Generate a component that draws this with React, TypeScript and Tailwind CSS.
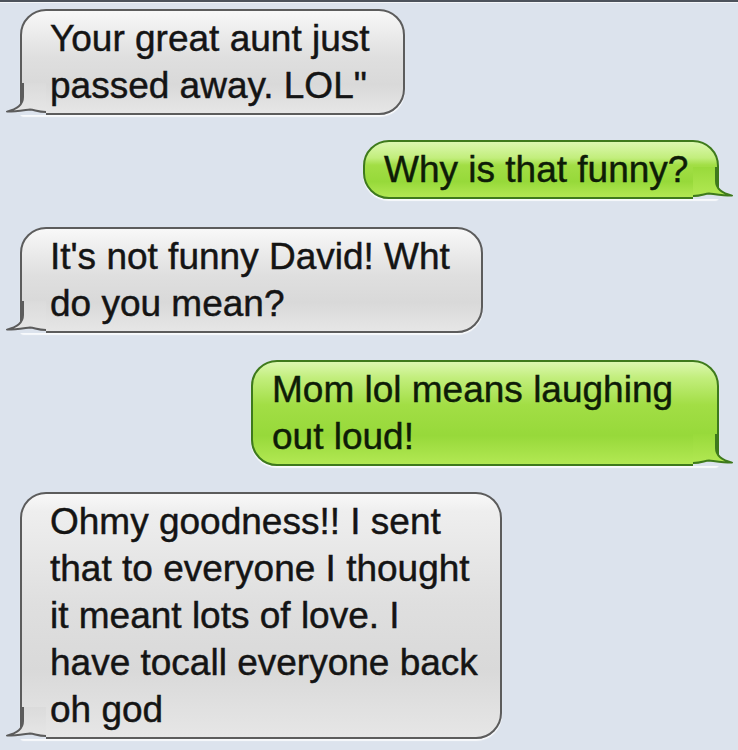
import React from "react";

type Msg = {
  side: "in" | "out";
  lines: string[];
  box: string;
};

const messages: Msg[] = [
  {
    side: "in",
    lines: ["Your great aunt just", 'passed away. LOL"'],
    box: "w-[385px] mt-[6px]",
  },
  {
    side: "out",
    lines: ["Why is that funny?"],
    box: "w-[356px] mt-[25px]",
  },
  {
    side: "in",
    lines: ["It's not funny David! Wht", "do you mean?"],
    box: "w-[463px] mt-[28px]",
  },
  {
    side: "out",
    lines: ["Mom lol means laughing", "out loud!"],
    box: "w-[468px] mt-[27px]",
  },
  {
    side: "in",
    lines: [
      "Ohmy goodness!! I sent",
      "that to everyone I thought",
      "it meant lots of love. I",
      "have tocall everyone back",
      "oh god",
    ],
    box: "w-[482px] mt-[26px]",
  },
];

// the little hook at the bottom corner of each bubble
const Tail = ({ side }: { side: "in" | "out" }) => {
  const gray = side === "in";
  const id = gray ? "tailGray" : "tailGreen";
  return (
    <svg
      width="40"
      height="32"
      viewBox="0 0 40 32"
      className={
        gray
          ? "absolute left-[-16px] bottom-[-2px]"
          : "absolute right-[-16px] bottom-[-2px] -scale-x-100"
      }
    >
      <defs>
        <linearGradient id={id} x1="0" y1="0" x2="0" y2="1">
          <stop offset="0" stopColor={gray ? "#dbdbdb" : "#99da3b"} />
          <stop offset="1" stopColor={gray ? "#e6e6e6" : "#b2e853"} />
        </linearGradient>
      </defs>
      <path
        d="M0.5 28.6 C8 28.8 16 27.5 24 26.5 C29 27 32 29.5 40 29.5 L40 32 L0 32 Z"
        fill="#dce3ed"
      />
      <path
        d="M17 0 L17 14 C17 21 12 26 1 28.6 C8 28.8 16 27.5 24 26.5 C29 27 32 29.5 40 29.5 L40 0 Z"
        fill={`url(#${id})`}
      />
      <path
        d="M17 0 L17 14 C17 21 12 26 1 28.6 C8 28.8 16 27.5 24 26.5 C29 27 32 29 40 29"
        fill="none"
        stroke={gray ? "#5c5c5c" : "#3e7a1c"}
        strokeWidth="2"
        strokeLinejoin="round"
      />
    </svg>
  );
};

const Bubble = ({ msg }: { msg: Msg }) => {
  const gray = msg.side === "in";
  return (
    <div
      className={
        gray
          ? `relative self-start ml-[20px] ${msg.box} border-2 border-[#5c5c5c] rounded-[26px] rounded-bl-[4px] py-[4px] pl-[28px] text-[#141414] bg-[linear-gradient(to_bottom,#f8f8f8_0%,#eeeeee_18px,#dfdfdf_45%,#d9d9d9_72%,#e6e6e6_100%)] shadow-[0_2px_1px_rgba(255,255,255,0.8)]`
          : `relative self-end mr-[19px] ${msg.box} border-2 border-[#3e7a1c] rounded-[26px] rounded-br-[4px] py-[4px] pl-[19px] text-[#0e1c07] bg-[linear-gradient(to_bottom,#dcf7b0_0%,#c2ee7c_16px,#a2de45_42%,#97d93a_72%,#b2e853_100%)] shadow-[0_2px_1px_rgba(255,255,255,0.8)]`
      }
    >
      <Tail side={msg.side} />
      <div className="relative whitespace-nowrap text-[37px] leading-[47px] [-webkit-text-stroke:0.45px_currentColor]">
        {msg.lines.map((line, i) => (
          <div key={i}>{line}</div>
        ))}
      </div>
    </div>
  );
};

export default function App() {
  return (
    <div className="w-[738px] h-[750px] overflow-hidden bg-[#dce3ed] font-['Liberation_Sans',Arial,sans-serif]">
      <div className="h-[2px] bg-[#4d535c]" />
      <div className="h-[1px] bg-[#f4f6f9]" />
      <div className="flex flex-col">
        {messages.map((m, i) => (
          <Bubble key={i} msg={m} />
        ))}
      </div>
    </div>
  );
}
